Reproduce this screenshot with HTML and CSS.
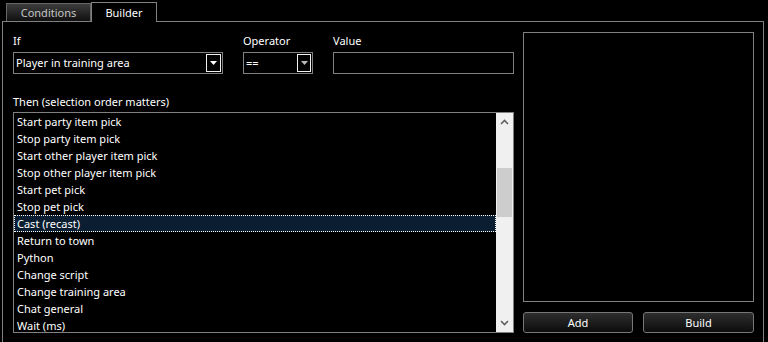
FILE: index.html
```html
<!DOCTYPE html>
<html lang="en">
<head>
    <meta charset="UTF-8">
    <title>Builder</title>
    <link rel="stylesheet" href="styles.css">
</head>
<body>
    <div class="tabs">
        <div class="tab">Conditions</div>
        <div class="tab active">Builder</div>
    </div>
    <div class="panel">
        <div class="left">
            <div class="fields">
                <div class="field field-if">
                    <label>If</label>
                    <div class="combo">
                        <span>Player in training area</span>
                        <span class="drop"><svg width="7" height="4" viewBox="0 0 7 4"><path d="M0 0h7L3.5 4z" fill="#fff"/></svg></span>
                    </div>
                </div>
                <div class="field field-op">
                    <label>Operator</label>
                    <div class="combo">
                        <span>==</span>
                        <span class="drop"><svg width="7" height="4" viewBox="0 0 7 4"><path d="M0 0h7L3.5 4z" fill="#bbb"/></svg></span>
                    </div>
                </div>
                <div class="field field-value">
                    <label>Value</label>
                    <div class="textbox"></div>
                </div>
            </div>
            <label class="then">Then (selection order matters)</label>
            <div class="listbox">
                <ul class="items">
                    <li>Start party item pick</li>
                    <li>Stop party item pick</li>
                    <li>Start other player item pick</li>
                    <li>Stop other player item pick</li>
                    <li>Start pet pick</li>
                    <li>Stop pet pick</li>
                    <li class="selected">Cast (recast)</li>
                    <li>Return to town</li>
                    <li>Python</li>
                    <li>Change script</li>
                    <li>Change training area</li>
                    <li>Chat general</li>
                    <li>Wait (ms)</li>
                </ul>
                <div class="scrollbar">
                    <svg class="arrow" width="9" height="6" viewBox="0 0 9 6"><path d="M1 5L4.5 1.5L8 5" stroke="#606060" stroke-width="1.6" fill="none"/></svg>
                    <div class="track"><div class="thumb"></div></div>
                    <svg class="arrow" width="9" height="6" viewBox="0 0 9 6"><path d="M1 1L4.5 4.5L8 1" stroke="#606060" stroke-width="1.6" fill="none"/></svg>
                </div>
            </div>
        </div>
        <div class="right">
            <div class="preview"></div>
            <div class="buttons">
                <button class="btn btn-add">Add</button>
                <button class="btn btn-build">Build</button>
            </div>
        </div>
    </div>
</body>
</html>
```
FILE: styles.css
```css
body {
    margin: 0;
    background: #000;
    color: #fff;
    font-family: "Noto Sans", "Open Sans", sans-serif;
    font-size: 11px;
    overflow: hidden;
}
.tabs {
    display: flex;
    align-items: flex-end;
    height: 21px;
    padding-left: 6px;
}
.tab {
    box-sizing: border-box;
    height: 18px;
    width: 85px;
    border: 1px solid #666;
    border-bottom: none;
    background: linear-gradient(#3c3c3c, #101010);
    color: #c4c4c4;
    text-align: center;
    line-height: 18px;
}
.tab.active {
    width: 66px;
    height: 20px;
    margin-bottom: -1px;
    background: #000;
    color: #fff;
    border-color: #808080;
    position: relative;
    line-height: 19px;
    z-index: 1;
}
.panel {
    box-sizing: border-box;
    margin-left: 2px;
    width: 762px;
    height: 330px;
    border: 1px solid #808080;
    padding: 10px 8px 0 10px;
    display: flex;
    gap: 9px;
}
.left {
    width: 501px;
    display: flex;
    flex-direction: column;
}
label {
    display: block;
    line-height: 17px;
    height: 16px;
    margin-bottom: 4px;
}
.fields {
    display: flex;
    gap: 20px;
}
.field-if { width: 210px; }
.field-op { width: 70px; }
.field-value { width: 181px; }
.combo {
    box-sizing: border-box;
    height: 22px;
    border: 1px solid #808080;
    display: flex;
    align-items: center;
    justify-content: space-between;
    padding: 0 1px 0 2px;
}
.combo span:first-child {
    line-height: 20px;
}
.drop {
    box-sizing: border-box;
    width: 15px;
    height: 18px;
    border: 1px solid #f0f0f0;
    display: flex;
    align-items: center;
    justify-content: center;
}
.field-op .drop {
    width: 14px;
}
.textbox {
    box-sizing: border-box;
    height: 22px;
    border: 1px solid #808080;
}
.then {
    margin-top: 19px;
    margin-bottom: 3px;
}
.listbox {
    box-sizing: border-box;
    height: 221px;
    border: 1px solid #808080;
    display: flex;
    overflow: hidden;
}
.items {
    list-style: none;
    margin: 0;
    padding: 0;
    flex: 1;
}
.items li {
    box-sizing: border-box;
    height: 17px;
    line-height: 18px;
    padding-left: 3px;
    white-space: nowrap;
}
.items li.selected {
    background: #0b1d30;
    outline: 1px dotted #fff;
    outline-offset: -1px;
}
.scrollbar {
    width: 17px;
    background: #f0f0f0;
    display: flex;
    flex-direction: column;
    align-items: center;
}
.arrow {
    margin: 6px 0;
}
.track {
    flex: 1;
    width: 100%;
    padding: 37px 1px 0;
    box-sizing: border-box;
}
.thumb {
    height: 49px;
    background: #cdcdcd;
}
.right {
    width: 231px;
    display: flex;
    flex-direction: column;
}
.preview {
    box-sizing: border-box;
    height: 270px;
    border: 1px solid #808080;
}
.buttons {
    display: flex;
    gap: 10px;
    margin-top: 10px;
}
.btn {
    box-sizing: border-box;
    width: 110px;
    height: 21px;
    border: 1px solid #777;
    border-radius: 3px;
    background: linear-gradient(#2e2e2e, #0c0c0c);
    color: #fff;
    font-family: inherit;
    font-size: 11px;
    padding: 0;
}
.btn-build {
    width: 111px;
}
```
